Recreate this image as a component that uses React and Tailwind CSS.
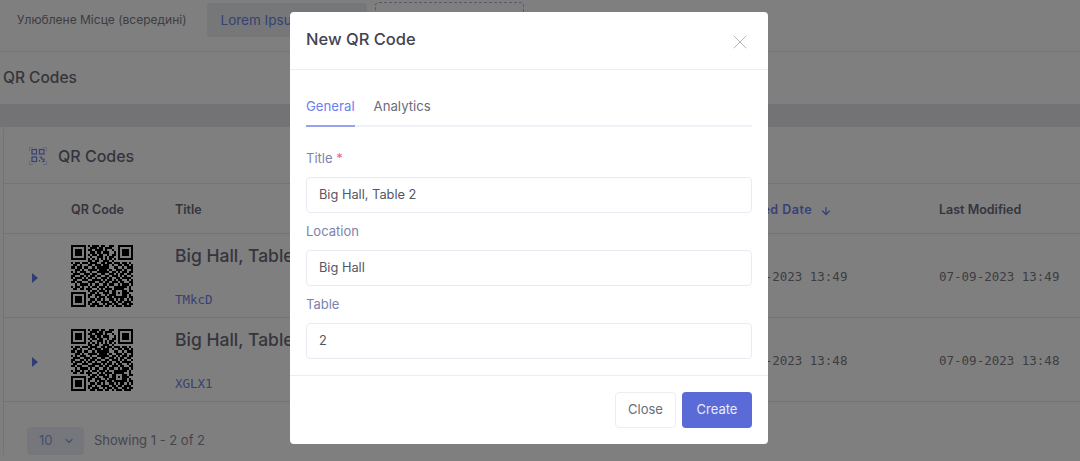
import React from "react";
import { ArrowDown, ChevronDown, X } from "lucide-react";

const qrRows = [
  "11111110101110110011001111111",
  "10000010011101101110001000001",
  "10111010110111101001001011101",
  "10111010011011011100101011101",
  "10111010101101100101101011101",
  "10000010010011101011001000001",
  "11111110101010101010101111111",
  "00000000110110011101000000000",
  "10110111011100110110111011010",
  "01101000110111011101001101101",
  "11011011001011111100110010111",
  "00110100111101111010011101001",
  "10101110010011111101101011011",
  "01110011101100110011010110110",
  "11001101011011001101110101001",
  "10111010110100111010011011110",
  "01100111001111010110101100101",
  "11011000111001101101110110011",
  "00101111010110011011001011101",
  "10110100101101110100111111010",
  "01101101110010101110111110010",
  "00000000101101110101100011011",
  "11111110011010011101101011100",
  "10000010110111001011100011010",
  "10111010100101110110111111011",
  "10111010011011010011010110101",
  "10111010110100111101101101110",
  "10000010101110010110110011011",
  "11111110011011101101011101110",
];

function QrImage() {
  return (
    <svg width="62" height="62" viewBox="0 0 29 29" className="shrink-0" shapeRendering="crispEdges">
      {qrRows.map((row, y) =>
        row.split("").map((cell, x) =>
          cell === "1" ? <rect key={x + "-" + y} x={x} y={y} width="1" height="1" fill="#000" /> : null
        )
      )}
    </svg>
  );
}

function QrIcon() {
  return (
    <svg width="18" height="18" viewBox="0 0 18 18" fill="none" className="shrink-0">
      <path d="M.5 4V.5H4M14 .5h3.5V4M.5 14v3.5H4M14 17.5h3.5V14" stroke="#b5bff0" strokeWidth="0.7" />
      <rect x="3" y="2.5" width="4.5" height="4.5" stroke="#6f82e8" strokeWidth="1.2" />
      <rect x="10.5" y="2.5" width="4.5" height="4.5" stroke="#6f82e8" strokeWidth="1.2" />
      <rect x="3" y="10" width="4.5" height="4.5" stroke="#6f82e8" strokeWidth="1.2" />
      <path d="M10.5 10h2v2h2.5v2.5h-2M10.5 13v1.5" stroke="#6f82e8" strokeWidth="1.2" />
    </svg>
  );
}

function Caret() {
  return (
    <svg width="6" height="10" viewBox="0 0 6 10" className="shrink-0">
      <path d="M0 0l6 5-6 5z" fill="#6478e8" />
    </svg>
  );
}

function TableRow({ code, created, modified }) {
  return (
    <div className="flex h-[84px] items-center border-b border-[#e8e8f0]">
      <div className="flex w-[67px] justify-start pt-1 pl-[28px]">
        <Caret />
      </div>
      <div className="w-[104px]">
        <QrImage />
      </div>
      <div className="flex h-full w-[552px] flex-col pt-[10px]">
        <span className="text-[17.5px] leading-[24px] font-medium text-[#6b6b78]">Big Hall, Table 2</span>
        <span className="mt-[23px] font-['DejaVu_Sans_Mono',monospace] text-[12.5px] leading-[18px] text-[#6f82e8]">{code}</span>
      </div>
      <div className="w-[212px] pt-1 font-['DejaVu_Sans_Mono',monospace] text-[12.5px] text-[#7b7b84]">{created}</div>
      <div className="pt-1 font-['DejaVu_Sans_Mono',monospace] text-[12.5px] text-[#7b7b84]">{modified}</div>
    </div>
  );
}

function Field({ label, required, value, className }) {
  return (
    <div className={className}>
      <label className="block text-[13px] leading-[20px] text-[#7a83ae]">
        {label} {required && <span className="text-[#f1648f]">*</span>}
      </label>
      <input
        readOnly
        value={value}
        className="mt-[9px] block h-[36px] w-full rounded border border-[#e9ebf3] bg-white px-[12px] pb-[2px] text-[12.8px] text-[#55565f] outline-none"
      />
    </div>
  );
}

export default function App() {
  return (
    <div className="relative h-[461px] w-[1080px] overflow-hidden bg-white font-['Inter',sans-serif]">
      {/* page behind the dialog */}
      <div className="flex h-[52px] items-start border-b border-[#e8e8f0] pl-[17px]">
        <span className="mt-[12px] text-[12px] leading-[16px] text-[#7b7b84]">Улюблене Місце (всередині)</span>
        <div className="mt-[3px] ml-[20px] flex h-[34px] w-[160px] items-center rounded bg-[#eceef3] pl-[14px] text-[13.5px] text-[#6f82e8]">
          Lorem Ipsum
        </div>
        <div className="mt-[2px] ml-[8px] h-[30px] w-[149px] rounded border border-dashed border-[#a9b4e8]"></div>
      </div>
      <div className="flex h-[52px] items-center pl-[3px] text-[15.5px] font-medium text-[#6b6b78]">QR Codes</div>
      <div className="h-[23px] bg-[#e6e6ec]"></div>
      <div className="ml-[3px] rounded-t border-l border-[#e8e8f0] bg-white">
        <div className="flex h-[57px] items-center gap-[11px] border-b border-[#e8e8f0] pt-[2px] pl-[25px]">
          <QrIcon />
          <span className="text-[16px] font-medium text-[#6b6b78]">QR Codes</span>
        </div>
        <div className="flex h-[50px] items-center border-b border-[#e8e8f0] pt-[4px] text-[12.5px] font-semibold text-[#6b6b78]">
          <span className="w-[171px] pl-[67px]">QR Code</span>
          <span className="w-[552px]">Title</span>
          <span className="flex w-[212px] items-center gap-[8px] tracking-[0.5px] text-[#6f82e8]">
            Created Date <ArrowDown size={12} strokeWidth={2.5} />
          </span>
          <span>Last Modified</span>
        </div>
        <TableRow code="TMkcD" created="07-09-2023 13:49" modified="07-09-2023 13:49" />
        <TableRow code="XGLX1" created="07-09-2023 13:48" modified="07-09-2023 13:48" />
        <div className="flex items-center gap-[10px] pt-[25px] pl-[23px]">
          <div className="flex h-[28px] w-[57px] items-center justify-between rounded bg-[#eaeef8] pr-[9px] pl-[12px] text-[13px] text-[#8f9fe0]">
            10 <ChevronDown size={12} strokeWidth={2.5} />
          </div>
          <span className="text-[13px] text-[#8b8b9c]">Showing 1 - 2 of 2</span>
        </div>
      </div>

      {/* dialog */}
      <div className="absolute inset-0 flex items-start justify-center bg-black/50 pt-[12px] pr-[22px]">
        <div className="h-[432px] w-[478px] rounded bg-white">
          <div className="flex h-[58px] items-start justify-between border-b border-[#eceef3] pr-[16px] pl-[16px]">
            <h5 className="mt-[15px] text-[16.5px] leading-[24px] font-medium text-[#434354]">New QR Code</h5>
            <X size={24} strokeWidth={1} className="mt-[18px] text-[#b5b7c0]" />
          </div>
          <div className="h-[305px] px-[16px] pt-[16px]">
            <div className="flex h-[41px] gap-[19px] border-b-2 border-[#f1f2f7] text-[13.2px]">
              <span className="-mb-[2px] border-b-2 border-[#98a2ee] pt-[11px] text-[#6d7ef0]">General</span>
              <span className="pt-[11px] text-[#6a6b7a]">Analytics</span>
            </div>
            <Field className="mt-[21px]" label="Title" required value="Big Hall, Table 2" />
            <Field className="mt-[8px]" label="Location" value="Big Hall" />
            <Field className="mt-[8px]" label="Table" value="2" />
          </div>
          <div className="flex h-[69px] items-start justify-end gap-[6px] border-t border-[#eceef3] pt-[16px] pr-[16px]">
            <button className="h-[36px] w-[61px] rounded border border-[#eceef3] bg-white text-[13px] text-[#6a6b7a]">Close</button>
            <button className="h-[36px] w-[70px] rounded bg-[#5a6ad6] text-[13px] text-[#e8eaf8]">Create</button>
          </div>
        </div>
      </div>
    </div>
  );
}
